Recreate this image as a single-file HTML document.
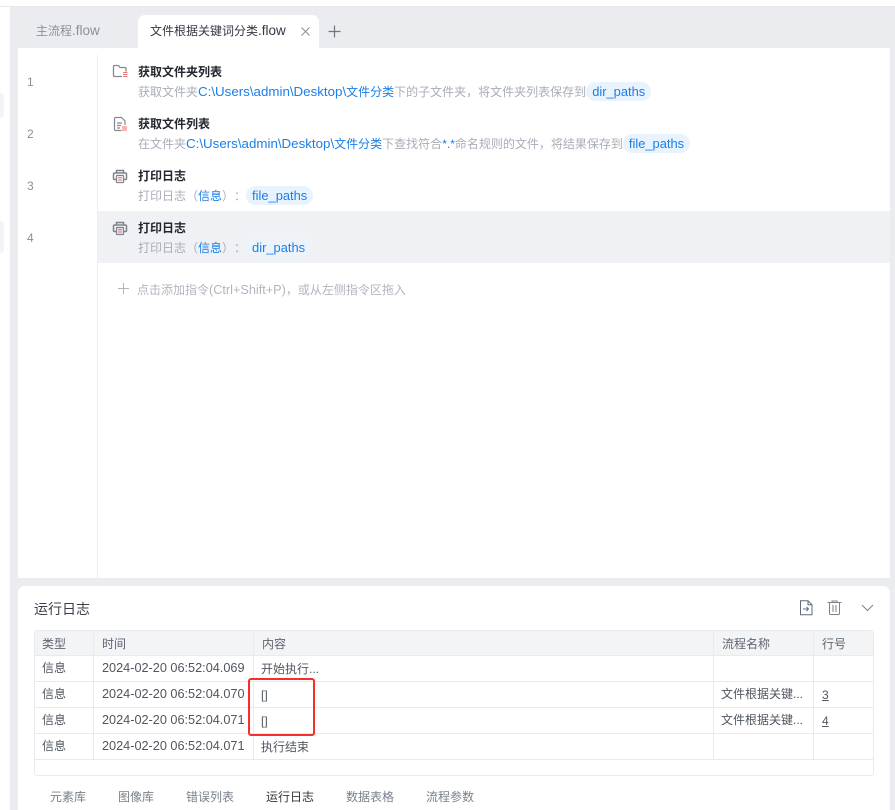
<!DOCTYPE html>
<html lang="zh"><head><meta charset="utf-8"><style>
html,body{margin:0;padding:0}
body{width:895px;height:810px;position:relative;overflow:hidden;background:#fff;font:12px/16px "Liberation Sans","Noto Sans CJK SC",sans-serif;color:#3d4350;text-spacing-trim:space-all}
div,svg{position:absolute}
div{white-space:nowrap}
.t{font-weight:700;color:#22262e}
.s{color:#a8adb8}
.b{color:#1a7fe8}
.l{font-size:13.34px}
.k{font-size:12px}
.p{display:inline-block;background:#e9f3fe;color:#1a7fe8;border-radius:10px;padding:0 6px;line-height:19px;height:19px;font-size:12.9px;vertical-align:0}
.n{left:27px;color:#8a8f99;font-size:12px}
.h{color:#5d6470}
.c{color:#50565f}
.d{font-size:12.7px}
.ln{background:#e8eaee}
.g{color:#7a808c}
.f{font-size:13.5px}
</style></head><body>
<div style="left:0;top:0;width:895px;height:6px;background:#fff;border-bottom:1px solid #e6e8ec"></div>
<div style="left:10px;top:7px;width:885px;height:803px;background:#ebecf0"></div>
<div style="left:0;top:93px;width:4px;height:25px;background:#f3f4f7;border-radius:0 3px 3px 0"></div>
<div style="left:0;top:221px;width:4px;height:32px;background:#f3f4f7;border-radius:0 3px 3px 0"></div>

<div class="g" style="left:36px;top:23px;color:#8b909b">主流程<span class="f">.flow</span></div>
<div style="left:138px;top:15px;width:181px;height:33px;background:#fff;border-radius:7px 7px 0 0"></div>
<div style="left:150px;top:23px;color:#333842">文件根据关键词分类<span class="f">.flow</span></div>
<svg style="left:300px;top:26px" width="11" height="11" viewBox="0 0 11 11" fill="none" stroke="#8a8f99" stroke-width="1"><path d="M1.500 1.500l8 8M9.500 1.500l-8 8"/></svg>
<svg style="left:328px;top:25px" width="13" height="13" viewBox="0 0 13 13" fill="none" stroke="#6f7581" stroke-width="1.2"><path d="M6.500 .5v12M.5 6.500h12"/></svg>

<div style="left:18px;top:48px;width:872px;height:530px;background:#fff"></div>
<div style="left:97px;top:55px;width:1px;height:523px;background:#eceef1"></div>
<div style="left:98px;top:211px;width:792px;height:52px;background:#f0f1f5"></div>

<div class="n" style="top:74px">1</div>
<div class="n" style="top:126px">2</div>
<div class="n" style="top:178px">3</div>
<div class="n" style="top:230px">4</div>

<svg style="left:112px;top:64px" width="16" height="15" viewBox="0 0 16 15" fill="none"><path d="M10 12.500H2.500a1 1 0 0 1-1-1V2.500a1 1 0 0 1 1-1h4l1.500 2H13a1 1 0 0 1 1 1v3" stroke="#85898f" stroke-width="1.300"/><path d="M11 8.500h4.500M11 10.500h4.500M11 12.500h4.500" stroke="#ee7772" stroke-width="1"/></svg>
<div class="t" style="left:138px;top:64px">获取文件夹列表</div>
<div class="s" style="left:138px;top:82px;line-height:19px">获取文件夹<span class="b"><span class="l">C:\Users\admin\Desktop\</span>文件分类</span>下的子文件夹，将文件夹列表保存到<span class="p">dir_paths</span></div>

<svg style="left:113px;top:116px" width="15" height="16" viewBox="0 0 15 16" fill="none"><path d="M8.500 14.500H2.500a1 1 0 0 1-1-1v-11a1 1 0 0 1 1-1h6l3.500 3.500v4M4 7h5M4 9.500h4M4 12h3" stroke="#85898f" stroke-width="1.200"/><rect x="9" y="10" width="5" height="5" fill="#f9b4b2"/></svg>
<div class="t" style="left:138px;top:116px">获取文件列表</div>
<div class="s" style="left:138px;top:134px;line-height:19px">在文件夹<span class="b"><span class="l">C:\Users\admin\Desktop\</span>文件分类</span>下查找符合<span class="b">*.*</span>命名规则的文件，将结果保存到<span class="p">file_paths</span></div>

<svg style="left:112px;top:169px" width="16" height="15" viewBox="0 0 16 15" fill="none"><path d="M4.500 4V1.500h7V4M4 10.500H2.500a1 1 0 0 1-1-1V5a1 1 0 0 1 1-1h11a1 1 0 0 1 1 1v4.500a1 1 0 0 1-1 1H12" stroke="#7d828c" stroke-width="1.500"/><rect x="4.500" y="6.500" width="7" height="7" rx=".5" stroke="#7d828c" stroke-width="1.200"/><path d="M6 8.800h4M6 11h4" stroke="#e8605c"/></svg>
<div class="t" style="left:138px;top:168px">打印日志</div>
<div class="s" style="left:138px;top:186px;line-height:19px">打印日志（<span class="b">信息</span>）：<span class="p">file_paths</span></div>

<svg style="left:112px;top:221px" width="16" height="15" viewBox="0 0 16 15" fill="none"><path d="M4.500 4V1.500h7V4M4 10.500H2.500a1 1 0 0 1-1-1V5a1 1 0 0 1 1-1h11a1 1 0 0 1 1 1v4.500a1 1 0 0 1-1 1H12" stroke="#7d828c" stroke-width="1.500"/><rect x="4.500" y="6.500" width="7" height="7" rx=".5" stroke="#7d828c" stroke-width="1.200"/><path d="M6 8.800h4M6 11h4" stroke="#e8605c"/></svg>
<div class="t" style="left:138px;top:220px">打印日志</div>
<div class="s" style="left:138px;top:238px;line-height:19px">打印日志（<span class="b">信息</span>）：<span class="p" style="background:#edf3fb">dir_paths</span></div>

<svg style="left:118px;top:283px" width="11" height="11" viewBox="0 0 11 11" fill="none" stroke="#b0b4bd"><path d="M5.500 0v11M0 5.500h11"/></svg>
<div class="s" style="left:137px;top:282px;color:#b2b6bf">点击添加指令<span style="font-size:12.700px">(Ctrl+Shift+P)</span>，或从左侧指令区拖入</div>

<div style="left:18px;top:586px;width:872px;height:224px;background:#fff;border-radius:7px 7px 0 0"></div>
<div style="left:34px;top:601px;font-size:14px;color:#3a3f49">运行日志</div>
<svg style="left:799px;top:600px" width="14" height="16" viewBox="0 0 14 16" fill="none" stroke="#5f6b7c" stroke-width="1"><path d="M1.500 .8h7.500l4 4v10h-11.500zM9 .8v4h4"/><path d="M4 9h5.500M7.500 7l2 2-2 2"/></svg>
<svg style="left:827px;top:600px" width="15" height="15" viewBox="0 0 15 15" fill="none" stroke="#7d838e" stroke-width="1"><path d="M.5 2.500h14M5 2.500V1h5v1.500M2.500 2.500v11a1 1 0 0 0 1 1h8a1 1 0 0 0 1-1v-11M6 5v7M9 5v7"/></svg>
<svg style="left:861px;top:604px" width="13" height="8" viewBox="0 0 13 8" fill="none" stroke="#7d838e" stroke-width="1"><path d="M1 1l5.500 5.500L12 1"/></svg>

<div style="left:34px;top:630px;width:838px;height:144px;border:1px solid #e8eaee;border-radius:3px"></div>
<div style="left:35px;top:631px;width:838px;height:24px;background:#f3f4f6"></div>
<div class="ln" style="left:35px;top:655px;width:838px;height:1px"></div>
<div class="ln" style="left:35px;top:681px;width:838px;height:1px"></div>
<div class="ln" style="left:35px;top:707px;width:838px;height:1px"></div>
<div class="ln" style="left:35px;top:733px;width:838px;height:1px"></div>
<div class="ln" style="left:35px;top:759px;width:838px;height:1px"></div>
<div class="ln" style="left:93px;top:631px;width:1px;height:128px"></div>
<div class="ln" style="left:253px;top:631px;width:1px;height:128px"></div>
<div class="ln" style="left:713px;top:631px;width:1px;height:128px"></div>
<div class="ln" style="left:813px;top:631px;width:1px;height:128px"></div>

<div class="h" style="left:42px;top:636px">类型</div>
<div class="h" style="left:102px;top:636px">时间</div>
<div class="h" style="left:262px;top:636px">内容</div>
<div class="h" style="left:722px;top:636px">流程名称</div>
<div class="h" style="left:822px;top:636px">行号</div>

<div class="c" style="left:42px;top:660px">信息</div>
<div class="c d" style="left:102px;top:660px">2024-02-20 06:52:04.069</div>
<div class="c" style="left:261px;top:661px">开始执行...</div>
<div class="c" style="left:42px;top:686px">信息</div>
<div class="c d" style="left:102px;top:686px">2024-02-20 06:52:04.070</div>
<div class="c" style="left:261px;top:687px">[]</div>
<div class="c" style="left:721px;top:686px">文件根据关键...</div>
<div class="c" style="left:822px;top:687px;text-decoration:underline">3</div>
<div class="c" style="left:42px;top:712px">信息</div>
<div class="c d" style="left:102px;top:712px">2024-02-20 06:52:04.071</div>
<div class="c" style="left:261px;top:713px">[]</div>
<div class="c" style="left:721px;top:712px">文件根据关键...</div>
<div class="c" style="left:822px;top:713px;text-decoration:underline">4</div>
<div class="c" style="left:42px;top:738px">信息</div>
<div class="c d" style="left:102px;top:738px">2024-02-20 06:52:04.071</div>
<div class="c" style="left:261px;top:739px">执行结束</div>

<div style="left:248px;top:678px;width:63px;height:54px;border:2px solid #f5302a;border-radius:3px"></div>

<div class="g" style="left:50px;top:789px">元素库</div>
<div class="g" style="left:118px;top:789px">图像库</div>
<div class="g" style="left:186px;top:789px">错误列表</div>
<div style="left:266px;top:789px;color:#33373f">运行日志</div>
<div class="g" style="left:346px;top:789px">数据表格</div>
<div class="g" style="left:426px;top:789px">流程参数</div>
</body></html>
